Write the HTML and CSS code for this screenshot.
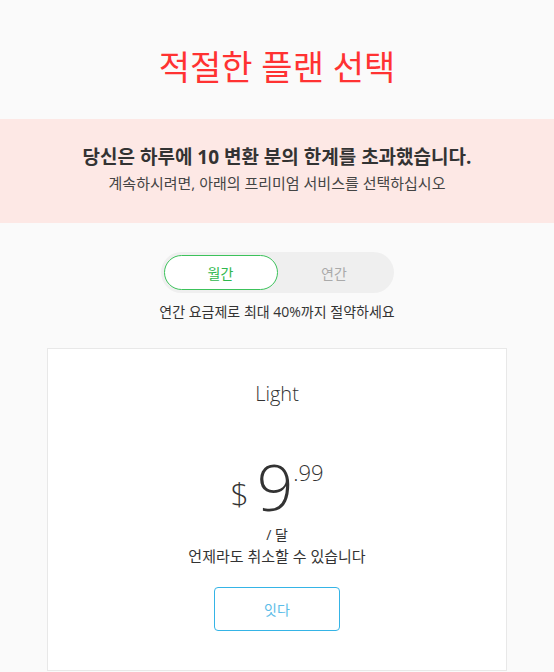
FILE: index.html
```html
<!DOCTYPE html>
<html lang="ko">
<head>
<meta charset="utf-8">
<link rel="stylesheet" href="styles.css">
</head>
<body>
<header class="head">
  <h1 class="title">적절한 플랜 선택</h1>
</header>
<section class="notice">
  <p class="notice-main">당신은 하루에 10 변환 분의 한계를 초과했습니다.</p>
  <p class="notice-sub">계속하시려면, 아래의 프리미엄 서비스를 선택하십시오</p>
</section>
<section class="billing">
  <div class="toggle">
    <button class="tab tab-active">월간</button>
    <button class="tab">연간</button>
  </div>
  <p class="save">연간 요금제로 최대 40%까지 절약하세요</p>
</section>
<section class="card">
  <h2 class="plan">Light</h2>
  <div class="price">
    <span class="cur">$</span><span class="amount">9</span><span class="cents">.99</span>
  </div>
  <p class="per">/ 달</p>
  <p class="cancel">언제라도 취소할 수 있습니다</p>
  <button class="cta">잇다</button>
</section>
</body>
</html>
```
FILE: styles.css
```css
* { box-sizing: border-box; }
html, body { margin: 0; padding: 0; }
body {
  background: #fafafa;
  font-family: "Open Sans", "Noto Sans CJK KR", sans-serif;
  color: #333;
  overflow: hidden;
}
p, h1, h2 { margin: 0; }
.head {
  height: 119px;
  display: flex;
  justify-content: center;
  padding-top: 44px;
}
.title {
  font-weight: 400;
  font-size: 34px;
  line-height: 46px;
  color: #ff3232;
}
.notice {
  background: #fde8e5;
  height: 104px;
  display: flex;
  flex-direction: column;
  align-items: center;
  padding-top: 24px;
}
.notice-main {
  font-size: 19px;
  font-weight: 700;
  line-height: 28px;
  color: #333;
}
.notice-sub {
  font-size: 15px;
  line-height: 24px;
  color: #444;
}
.billing {
  display: flex;
  flex-direction: column;
  align-items: center;
  padding-top: 29px;
}
.toggle {
  width: 233px;
  height: 41px;
  background: #efefef;
  border-radius: 21px;
  padding: 3px;
  display: flex;
}
.tab {
  flex: 1 1 0;
  border: none;
  background: transparent;
  font-family: inherit;
  font-size: 14px;
  color: #aaa;
  border-radius: 18px;
  padding: 0;
  margin: 0;
}
.tab-active {
  flex: 0 0 114px;
  background: #fff;
  border: 1px solid #3cc25b;
  color: #2fb84d;
}
.save {
  font-size: 14px;
  line-height: 20px;
  margin-top: 9px;
  color: #333;
}
.card {
  width: 460px;
  margin: 26px auto 0;
  background: #fff;
  border: 1px solid #e8e8e8;
  height: 323px;
  display: flex;
  flex-direction: column;
  align-items: center;
}
.plan {
  font-weight: 300;
  font-size: 20px;
  line-height: 28px;
  color: #333;
  margin-top: 31px;
}
.price {
  display: flex;
  align-items: flex-start;
  margin-top: 51px;
  color: #333;
  font-weight: 300;
  height: 56px;
}
.cur {
  font-size: 32px;
  line-height: 32px;
  margin-top: 18px;
  margin-right: 8px;
}
.amount {
  font-size: 64px;
  line-height: 56px;
}
.cents {
  font-size: 22px;
  line-height: 22px;
  margin-top: 2px;
}
.per {
  font-size: 14px;
  line-height: 20px;
  margin-top: 10px;
}
.cancel {
  font-size: 15px;
  line-height: 22px;
}
.cta {
  margin-top: 20px;
  width: 126px;
  height: 44px;
  background: #fff;
  border: 1px solid #35b4e6;
  border-radius: 4px;
  font-family: inherit;
  font-size: 14px;
  color: #5cbde8;
}
```
